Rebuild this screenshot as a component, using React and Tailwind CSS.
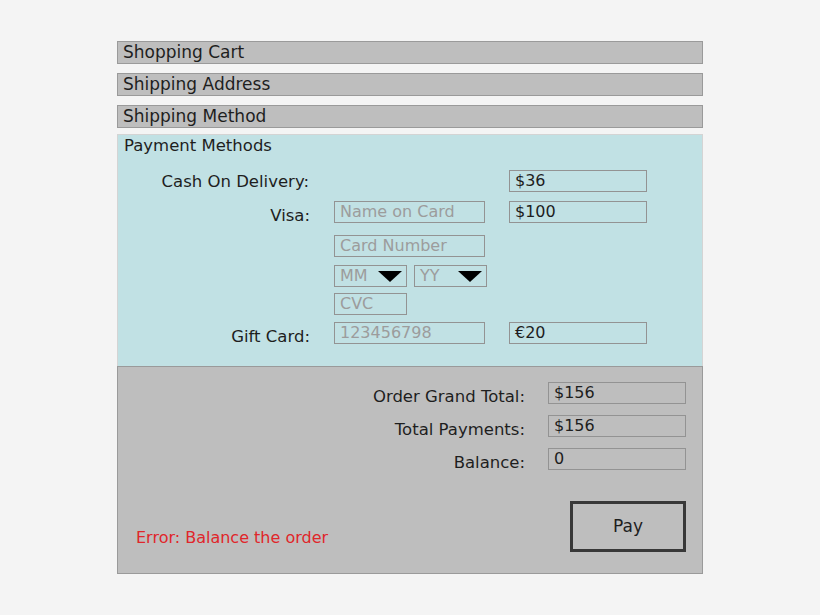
import React from 'react'

const font = { fontFamily: '"DejaVu Sans", "Liberation Sans", sans-serif' }

function Bar({ children }) {
  return (
    <div className="h-[23px] border border-[#9a9a9a] bg-[#bebebe] pl-[5px] flex items-center text-[17px] text-[#1e1e1e] leading-none">
      {children}
    </div>
  )
}

function Field({ value, placeholder, className = '' }) {
  return (
    <div className={`h-[22px] border border-[#939393] flex items-center pl-[5px] text-[16px] leading-none ${className}`}>
      {value ? (
        <span className="text-[#1e1e1e]">{value}</span>
      ) : (
        <span className="text-[#9c9c9c]">{placeholder}</span>
      )}
    </div>
  )
}

function Select({ label, className = '' }) {
  return (
    <div className={`h-[22px] border border-[#939393] flex items-center justify-between pl-[5px] pr-[4px] text-[16px] leading-none text-[#9c9c9c] ${className}`}>
      <span>{label}</span>
      <svg width="24" height="12" viewBox="0 0 24 12">
        <polygon points="0,1 24,1 12,12" fill="#000" />
      </svg>
    </div>
  )
}

function Label({ children, className = '' }) {
  return (
    <div className={`shrink-0 h-[22px] text-right text-[16.5px] text-[#1e1e1e] pt-[7px] leading-[16px] ${className}`}>{children}</div>
  )
}

export default function App() {
  return (
    <div className="min-h-[615px] bg-[#f4f4f4] pt-[41px]" style={font}>
      <div className="w-[586px] mx-auto flex flex-col">
        <Bar>Shopping Cart</Bar>
        <div className="mt-[9px]"><Bar>Shipping Address</Bar></div>
        <div className="mt-[9px]"><Bar>Shipping Method</Bar></div>

        {/* payment methods */}
        <div className="mt-[6px] h-[232px] bg-[#c1e1e4] border border-b-0 border-[#d4d4d4] pt-[1px]">
          <div className="pl-[6px] text-[16.5px] text-[#1e1e1e] leading-[20px]">Payment Methods</div>

          <div className="mt-[14px] flex items-start">
            <Label className="w-[191px] !pt-[4px]">Cash On Delivery:</Label>
            <div className="w-[175px] shrink-0 ml-[25px]"></div>
            <Field value="$36" className="w-[138px]" />
          </div>

          <div className="mt-[9px] flex items-start">
            <Label className="w-[192px]">Visa:</Label>
            <Field placeholder="Name on Card" className="w-[151px] ml-[24px]" />
            <Field value="$100" className="w-[138px] ml-[24px]" />
          </div>

          <div className="mt-[12px] flex items-center">
            <Field placeholder="Card Number" className="w-[151px] ml-[216px]" />
          </div>

          <div className="mt-[8px] flex items-center">
            <Select label="MM" className="w-[73px] ml-[216px]" />
            <Select label="YY" className="w-[73px] ml-[7px]" />
          </div>

          <div className="mt-[6px] flex items-center">
            <Field placeholder="CVC" className="w-[73px] ml-[216px]" />
          </div>

          <div className="mt-[7px] flex items-start">
            <Label className="w-[192px]">Gift Card:</Label>
            <Field placeholder="123456798" className="w-[151px] ml-[24px]" />
            <Field value="€20" className="w-[138px] ml-[24px]" />
          </div>
        </div>

        {/* summary */}
        <div className="h-[208px] bg-[#bebebe] border border-[#9a9a9a] flex flex-col">
          <div className="pt-[15px] flex flex-col gap-[11px]">
            {[
              ['Order Grand Total:', '$156'],
              ['Total Payments:', '$156'],
              ['Balance:', '0'],
            ].map(([label, value]) => (
              <div key={label} className="flex items-start">
                <Label className="w-[407px]">{label}</Label>
                <Field value={value} className="w-[138px] ml-[23px] border-[#8e8e8e]" />
              </div>
            ))}
          </div>
          <div className="mt-[31px] flex items-end justify-between pl-[18px] pr-[16px]">
            <div className="text-[16px] text-[#e0262b] mb-[2px]">Error: Balance the order</div>
            <button className="w-[116px] h-[51px] border-[3px] border-[#383838] text-[17px] text-[#1e1e1e]">
              Pay
            </button>
          </div>
        </div>
      </div>
    </div>
  )
}
